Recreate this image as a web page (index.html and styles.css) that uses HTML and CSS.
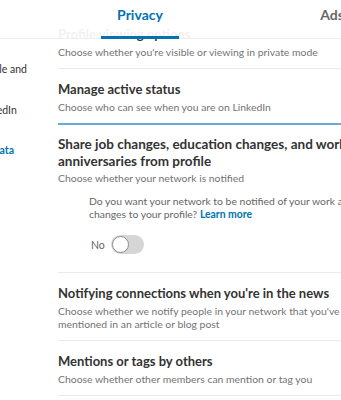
FILE: index.html
```html
<!DOCTYPE html>
<html lang="en">
<head>
    <meta charset="UTF-8">
    <meta name="viewport" content="width=device-width, initial-scale=1.0">
    <title>Privacy settings</title>
    <link rel="stylesheet" href="styles.css">
</head>
<body>
    <!-- Top tabs, floating over the scrolled settings -->
    <div class="tabs">
        <div class="tab">Account</div>
        <div class="tab active"><span>Privacy</span></div>
        <div class="tab">Ads</div>
    </div>

    <div class="page">
        <!-- Left menu -->
        <ul class="side-menu">
            <li>How others see your profile and<br>network information</li>
            <li>How others see your LinkedIn<br>activity</li>
            <li class="current">How LinkedIn uses your data</li>
        </ul>

        <!-- Settings list -->
        <div class="settings">
            <div class="setting">
                <h3>Profile viewing options</h3>
                <p>Choose whether you're visible or viewing in private mode</p>
            </div>
            <div class="setting focused">
                <h3>Manage active status</h3>
                <p>Choose who can see when you are on LinkedIn</p>
            </div>
            <div class="setting open">
                <h3 class="big">Share job changes, education changes, and work anniversaries from profile</h3>
                <p>Choose whether your network is notified</p>
                <div class="setting-body">
                    <p class="question">Do you want your network to be notified of your work and education changes to your profile? <a href="#">Learn more</a></p>
                    <label class="switch-row">
                        <span class="switch-label">No</span>
                        <span class="switch"><span class="knob"></span></span>
                    </label>
                </div>
            </div>
            <div class="setting">
                <h3>Notifying connections when you're in the news</h3>
                <p>Choose whether we notify people in your network that you've mentioned in an article or blog post</p>
            </div>
            <div class="setting">
                <h3>Mentions or tags by others</h3>
                <p>Choose whether other members can mention or tag you</p>
            </div>
        </div>
    </div>
</body>
</html>
```

FILE: styles.css
```css
* {
    margin: 0;
    padding: 0;
    box-sizing: border-box;
}

body {
    font-family: 'Lato', 'Liberation Sans', sans-serif;
    background: #fff;
    color: #333;
    width: 341px;
    height: 400px;
    overflow: hidden;
    position: relative;
}

/* Tabs */
.tabs {
    position: absolute;
    top: 0;
    left: -148px;
    display: flex;
    height: 39px;
    width: 700px;
    background: rgba(255, 255, 255, 0.93);
    border-bottom: 1px solid #eceef0;
    z-index: 5;
}

.tab {
    width: 192px;
    flex-shrink: 0;
    display: flex;
    justify-content: center;
    font-size: 14px;
    font-weight: 700;
    color: #666;
    line-height: 30px;
}

.tab.active {
    color: #0073b1;
}

.tab.active span {
    padding: 0 16px;
    border-bottom: 3px solid #0073b1;
    height: 39px;
}

/* Page */
.page {
    display: flex;
}

.side-menu {
    list-style: none;
    width: 150px;
    flex-shrink: 0;
    margin-left: -120px;
    padding-top: 62px;
    font-size: 10.5px;
    line-height: 14px;
    color: #333;
}

.side-menu li {
    height: 40.5px;
    white-space: nowrap;
}

.side-menu li.current {
    color: #0073b1;
    font-weight: 700;
}

.settings {
    width: 295px;
    flex-shrink: 0;
    margin-left: 28px;
    padding-top: 14px;
}

.setting {
    padding: 11px 0 9.5px;
    border-bottom: 1px solid #e9ebed;
}

.setting.focused {
    padding-bottom: 9px;
    border-bottom: 2px solid #65acd8;
}

.setting h3 {
    font-size: 13px;
    font-weight: 700;
    line-height: 18px;
    color: #333;
}

.setting h3.big {
    font-size: 13.5px;
    line-height: 17px;
}

.setting p {
    font-size: 10.4px;
    line-height: 13px;
    color: #737373;
    margin-top: 2.5px;
}

.setting.open {
    padding-bottom: 19px;
}

.setting-body {
    padding-left: 31px;
    margin-top: 10px;
    width: 352px;
}

.setting-body .question {
    margin-top: 0;
    color: #666;
}

.question a {
    color: #0073b1;
    font-weight: 700;
    text-decoration: none;
}

.switch-row {
    display: flex;
    align-items: center;
    gap: 6px;
    margin-top: 14px;
    padding-left: 2px;
    margin-bottom: -1px;
}

.switch-label {
    font-size: 10.5px;
    color: #666;
}

.switch {
    width: 33px;
    height: 19px;
    border-radius: 10px;
    background: #d6d6d6;
    display: flex;
    align-items: center;
    padding-left: 1px;
}

.knob {
    width: 17px;
    height: 17px;
    border-radius: 50%;
    background: #fff;
    border: 1px solid #8c8c8c;
}
```
